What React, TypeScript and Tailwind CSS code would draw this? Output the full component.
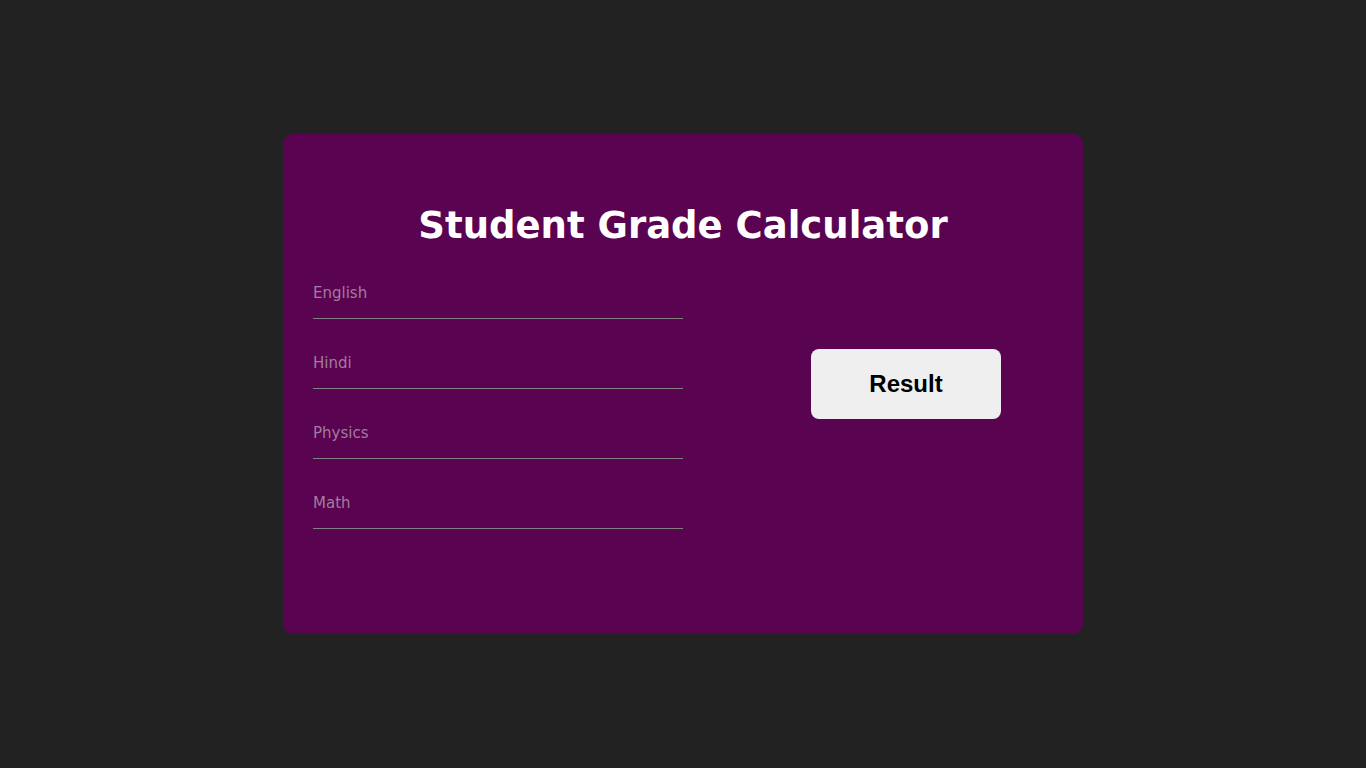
import React, { useState } from 'react';

const subjects = ['English', 'Hindi', 'Physics', 'Math'];

const App: React.FC = () => {
    const [marks, setMarks] = useState<Record<string, string>>({});

    return (
        <div className="min-h-screen w-full bg-[#222222] flex items-start justify-center pt-[134px] font-['Comic_Sans_MS','DejaVu_Sans',sans-serif]">
            <div className="w-[800px] h-[500px] bg-[#590351] rounded-[10px] px-[30px] pt-[56px]">
                <h1 className="text-center text-white font-bold text-[37px] leading-[70px] mt-[1px]">
                    Student Grade Calculator
                </h1>

                <div className="flex mt-[18px]">
                    <div className="w-[370px] flex flex-col gap-[30px]">
                        {subjects.map((s) => (
                            <input
                                key={s}
                                type="text"
                                placeholder={s}
                                value={marks[s] ?? ''}
                                onChange={(e) => setMarks({ ...marks, [s]: e.target.value })}
                                className="h-[40px] w-full pb-[12px] bg-transparent border-b border-[#808080] text-[15px] text-white outline-none placeholder:text-[#a27c9e]"
                            />
                        ))}
                    </div>

                    <div className="flex-1 flex justify-center pl-[76px] pt-[70px]">
                        <button className="w-[190px] h-[70px] bg-[#efefef] rounded-[8px] text-black text-[24px] font-bold font-['Liberation_Sans',Arial,sans-serif]">
                            Result
                        </button>
                    </div>
                </div>
            </div>
        </div>
    );
};

export default App;
